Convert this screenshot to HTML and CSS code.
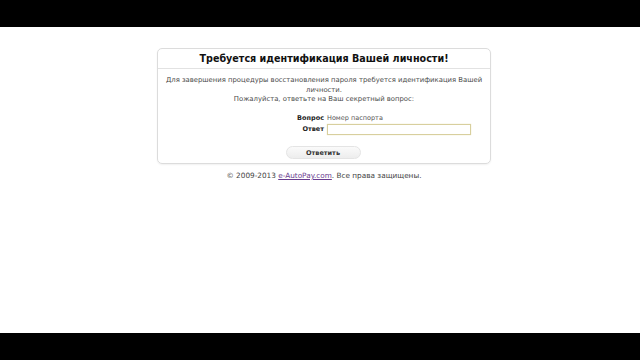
FILE: index.html
```html
<!DOCTYPE html>
<html lang="ru">

<head>
    <meta charset="UTF-8">
    <meta name="viewport" content="width=device-width, initial-scale=1.0">
    <title>Идентификация</title>
    <link rel="stylesheet" href="styles.css">
</head>

<body>
    <div class="bar"></div>
    <div class="page">
        <div class="box">
            <div class="box-title">Требуется идентификация Вашей личности!</div>
            <div class="box-body">
                <p class="intro">Для завершения процедуры восстановления пароля требуется идентификация Вашей личности.<br>Пожалуйста, ответьте на Ваш секретный вопрос:</p>
                <div class="form">
                    <div class="row">
                        <span class="label">Вопрос</span>
                        <span class="value">Номер паспорта</span>
                    </div>
                    <div class="row">
                        <span class="label">Ответ</span>
                        <input class="answer" type="text">
                    </div>
                </div>
                <div class="actions">
                    <button class="btn">Ответить</button>
                </div>
            </div>
        </div>
        <div class="footer">© 2009-2013 <a href="#">e-AutoPay.com</a>. Все права защищены.</div>
    </div>
    <div class="bar"></div>
</body>

</html>
```

FILE: styles.css
```css
* {
    margin: 0;
    padding: 0;
    box-sizing: border-box;
}

body {
    background-color: #000;
    font-family: "DejaVu Sans", Verdana, sans-serif;
    color: #333;
}

.bar {
    height: 27px;
    background-color: #000;
}

.page {
    height: 306px;
    background-color: #fff;
    padding-top: 21px;
    padding-left: 8px;
}

.box {
    width: 334px;
    margin: 0 auto;
    border: 1px solid #dcdcdc;
    border-radius: 5px;
    box-shadow: 0 1px 2px rgba(0, 0, 0, 0.06);
}

.box-title {
    height: 20px;
    line-height: 20px;
    text-align: center;
    font-size: 9.6px;
    font-weight: bold;
    color: #111;
    border-bottom: 1px solid #e2e2e2;
}

.box-body {
    padding: 7px 4px 4px;
}

.intro {
    font-size: 6.85px;
    line-height: 9.5px;
    text-align: center;
    color: #4a4a4a;
}

.form {
    margin-top: 8px;
}

.row {
    display: flex;
    align-items: center;
    height: 11px;
    font-size: 6.5px;
}

.label {
    width: 165px;
    text-align: right;
    font-weight: bold;
    color: #222;
    padding-right: 3px;
}

.value {
    color: #555;
}

.answer {
    width: 144px;
    height: 11px;
    border: 1px solid #d8cf9e;
    box-shadow: 0 0 1px #e8dfb0;
    outline: none;
}

.actions {
    text-align: center;
    margin-top: 5px;
}

.btn {
    width: 75px;
    height: 13px;
    border: 1px solid #e4e4e4;
    border-radius: 7px;
    background: linear-gradient(#fafafa, #ededed);
    font-family: "DejaVu Sans", Verdana, sans-serif;
    font-size: 6.5px;
    font-weight: bold;
    color: #333;
    margin-right: 2px;
}

.footer {
    text-align: center;
    font-size: 7.3px;
    color: #444;
    margin-top: 7px;
}

.footer a {
    color: #6a3d8f;
}
```
